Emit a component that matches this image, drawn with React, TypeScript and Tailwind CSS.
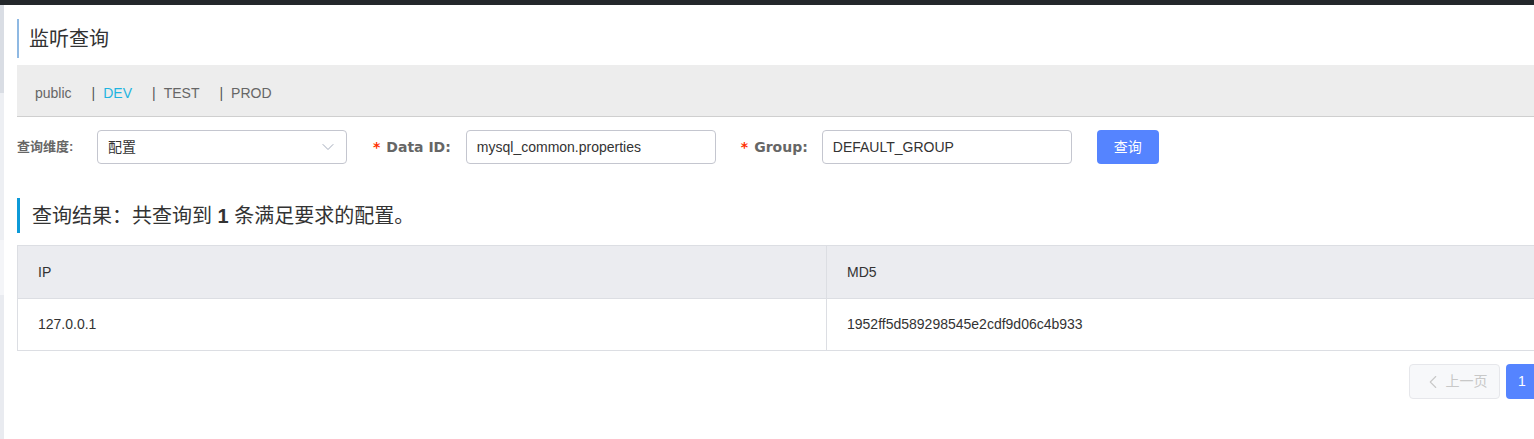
import { ChevronDown, ChevronLeft, ChevronRight } from 'lucide-react'

const namespaces = [
  { name: 'public', pipe: false, active: false },
  { name: 'DEV', pipe: true, active: true },
  { name: 'TEST', pipe: true, active: false },
  { name: 'PROD', pipe: true, active: false },
]

const Label = ({ text }: { text: string }) => (
  <label className="flex items-center font-['DejaVu_Sans',sans-serif] text-[14px] font-bold text-[#666]">
    <span className="mr-[6px] text-[#ff3000]">*</span>
    {text}
  </label>
)

const App = () => {
  return (
    <div className="relative h-[439px] w-[1534px] overflow-hidden bg-white font-['Liberation_Sans','Noto_Sans_CJK_SC',sans-serif] text-[#333]">
      <div className="h-[5px] bg-[#23272b]" />
      <div className="flex">
        <div className="flex w-[4px] shrink-0 flex-col">
          <div className="h-[88px] bg-[#d9dde4]" />
          <div className="h-[147px] bg-[#edeff3]" />
          <div className="h-[55px] bg-[#f4f5f8]" />
          <div className="h-[150px] bg-[#e9ebf0]" />
        </div>

        <div className="w-[1633px] shrink-0 pl-[13px] pt-[14px]">
          {/* page title */}
          <div className="flex h-[39px] items-center border-l-2 border-[#8fb9e3] pl-[10px] text-[20px] text-[#333]">
            监听查询
          </div>

          {/* namespace bar */}
          <div className="mt-[7px] flex h-[52px] items-center border-b border-[#cfcfcf] bg-[#ededed] pl-[18px] pt-[5px] text-[14px] text-[#666]">
            {namespaces.map((ns) => (
              <span key={ns.name} className="mr-[20px] flex items-center">
                {ns.pipe && <span className="mr-[8px] text-[#555]">|</span>}
                <span className={ns.active ? 'text-[#1fb4e0]' : ''}>{ns.name}</span>
              </span>
            ))}
          </div>

          {/* query form */}
          <div className="mt-[13px] flex h-[34px] items-center">
            <label className="w-[65px] text-[13px] font-bold text-[#666]">查询维度:</label>
            <div className="ml-[15px] flex h-[34px] w-[250px] items-center justify-between rounded-[4px] border border-[#c4c6cf] pl-[10px] pr-[8px] text-[14px] text-[#333]">
              <span>配置</span>
              <ChevronDown className="h-[20px] w-[20px] text-[#9aa3b5]" strokeWidth={1.1} />
            </div>

            <div className="ml-[26px] flex items-center">
              <Label text="Data ID:" />
              <div className="ml-[15px] flex h-[34px] w-[250px] items-center rounded-[4px] border border-[#c4c6cf] px-[10px] text-[14px] text-[#333]">
                mysql_common.properties
              </div>
            </div>

            <div className="ml-[25px] flex items-center">
              <Label text="Group:" />
              <div className="ml-[14px] flex h-[34px] w-[250px] items-center rounded-[4px] border border-[#c4c6cf] px-[10px] text-[14px] text-[#333]">
                DEFAULT_GROUP
              </div>
            </div>

            <button className="ml-[25px] h-[34px] w-[62px] rounded-[4px] bg-[#5584ff] text-[14px] text-white">
              查询
            </button>
          </div>

          {/* result title */}
          <div className="mt-[34px] flex h-[35px] items-center border-l-[3px] border-[#0d9ad8] pl-[12px] text-[20px] text-[#333]">
            查询结果：共查询到&nbsp;<b className="font-bold">1</b>&nbsp;条满足要求的配置。
          </div>

          {/* table */}
          <div className="mt-[12px] border border-[#dcdee3]">
            <div className="grid h-[52px] grid-cols-2 bg-[#ebecf0] text-[14px] text-[#333]">
              <div className="flex h-full items-center border-r border-[#dcdee3] px-[20px]">IP</div>
              <div className="flex h-full items-center px-[20px]">MD5</div>
            </div>
            <div className="grid h-[52px] grid-cols-2 border-t border-[#dcdee3] text-[14px] text-[#333]">
              <div className="flex h-full items-center border-r border-[#dcdee3] px-[20px]">127.0.0.1</div>
              <div className="flex h-full items-center px-[20px]">1952ff5d589298545e2cdf9d06c4b933</div>
            </div>
          </div>

          {/* pagination */}
          <div className="mt-[13px] flex justify-end gap-[6px] pr-[2px]">
            <button className="flex h-[35px] w-[91px] items-center justify-center gap-[2px] rounded-[4px] border border-[#e6e7eb] bg-[#f7f8fa] text-[14px] text-[#c8c8c8]">
              <ChevronLeft className="h-[22px] w-[22px]" strokeWidth={1.2} />
              上一页
            </button>
            <button className="h-[35px] w-[32px] rounded-[4px] bg-[#5584ff] text-[14px] text-white">1</button>
            <button className="flex h-[35px] w-[91px] items-center justify-center gap-[2px] rounded-[4px] border border-[#e6e7eb] bg-[#f7f8fa] text-[14px] text-[#c8c8c8]">
              下一页
              <ChevronRight className="h-[22px] w-[22px]" strokeWidth={1.2} />
            </button>
          </div>
        </div>
      </div>
    </div>
  )
}

export default App
